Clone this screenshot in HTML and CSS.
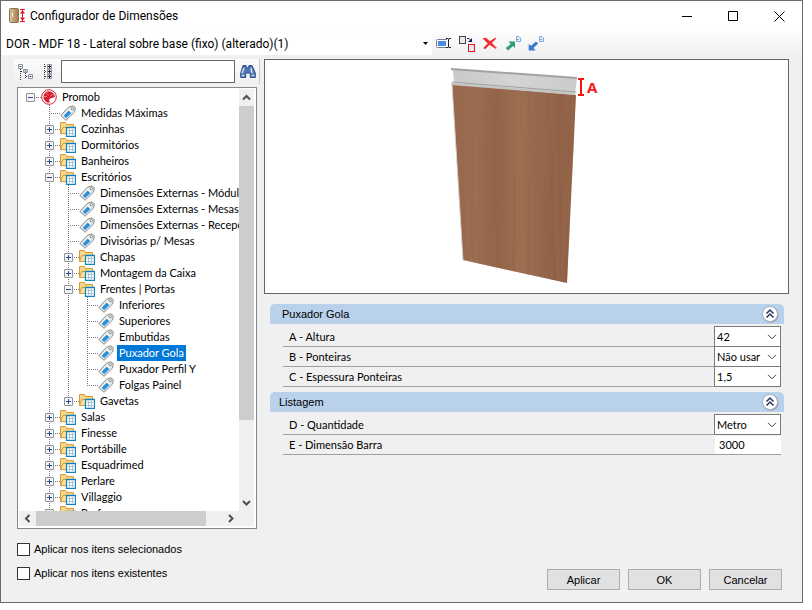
FILE: index.html
```html
<!DOCTYPE html>
<html lang="pt-BR">
  <head>
    <meta charset="UTF-8" />
    <meta name="viewport" content="width=device-width, initial-scale=1.0" />
    <link rel="stylesheet" href="styles.css">
    <title>Configurador de Dimensões</title>
  </head>
  <body>
    <!-- shared icons -->
    <svg class="sprite" aria-hidden="true">
      <symbol id="tag" viewBox="0 0 16 16">
        <path d="M.8 10.500 8.500 2.200 13 .8 15.300 2.700 14.600 7 6 15.300Z" fill="#e6e6e6" stroke="#8c8c8c" />
        <path d="M2.800 10.500 9 4l3.500 3.200L6 13.500Z" fill="#fff" />
        <path d="M3.600 10.800 8.600 5.600l2.900 2.400-5.300 5.200Z" fill="#2a93d5" />
        <circle cx="12.300" cy="3.700" r="1.200" fill="#fff" stroke="#888" />
      </symbol>
      <symbol id="folder" viewBox="0 0 16 16">
        <path d="M.5 1.500h5l1 2h7v9H.5Z" fill="#f8d68a" stroke="#d69a35" />
        <path d="M.5 12.500 3 6.500h11v6Z" fill="#fde3a0" stroke="#d69a35" />
        <path d="M6.500 6.500h9v9h-9Z" fill="#fff" stroke="#1581bd" stroke-width="1.300" />
        <path d="M8 9.500h6M8 12.500h6M9.500 9v5M12.500 9v5" stroke="#9cc4e4" />
        <path d="M9 8.500h1M12 8.500h1" stroke="#f0a840" />
      </symbol>
      <symbol id="chevron" viewBox="0 0 10 6">
        <path d="M1 .8 5 4.800 9 .8" fill="none" stroke="#444" />
      </symbol>
      <symbol id="collapse" viewBox="0 0 18 18">
        <circle cx="9.500" cy="9.500" r="8" fill="#8994a8" />
        <circle cx="9" cy="9" r="7.500" fill="#fff" stroke="#a9b3c4" />
        <path d="M5.500 8.500 9 5l3.500 3.500M5.500 12.500 9 9l3.500 3.500" fill="none" stroke="#24345f" stroke-width="1.500" />
      </symbol>
    </svg>

    <div class="window">
      <div class="titlebar">
        <svg class="app-icon" viewBox="0 0 18 16">
          <defs>
            <linearGradient id="box"><stop offset="0" stop-color="#dcc49c" /><stop offset="1" stop-color="#a07a4d" /></linearGradient>
          </defs>
          <rect x=".5" y=".5" width="9" height="14" rx="1" fill="url(#box)" stroke="#8f734f" />
          <path d="M3.500 4.500v4" stroke="#fff" />
          <path d="M11 1.500h5M11 13.500h5M13.500 2v12" stroke="#e0142c" />
          <path d="M11 5.500 13.500 2 16 5.500ZM11 9.500l2.500 3.500L16 9.500Z" fill="#e0142c" />
        </svg>
        <span class="title">Configurador de Dimensões</span>
        <button class="win-button" aria-label="Minimizar"><svg viewBox="0 0 11 11"><path d="M0 5.500h10" stroke="#000" /></svg></button>
        <button class="win-button" aria-label="Maximizar"><svg viewBox="0 0 11 11"><path d="M.5.5h9v9h-9Z" fill="none" stroke="#000" /></svg></button>
        <button class="win-button" aria-label="Fechar"><svg viewBox="0 0 11 11"><path d="M.5.5l10 10M10.500.5l-10 10" stroke="#000" /></svg></button>
      </div>

      <div class="toolbar">
        <div class="model">
          <select aria-label="Modelo">
            <option>DOR - MDF 18 - Lateral sobre base (fixo) (alterado)(1)</option>
          </select>
          <svg viewBox="0 0 5 3"><path d="M0 0h5L2.500 3Z" /></svg>
        </div>
        <button class="tool" aria-label="Renomear">
          <svg viewBox="0 0 16 16">
            <rect x=".5" y="3.500" width="12" height="8" rx="1" fill="#fff" stroke="#6f7f9c" />
            <rect x="2" y="5" width="8" height="5" fill="#4b8be8" />
            <path d="M12.500 2.500v9" stroke="#fff" stroke-width="3" />
            <path d="M10 2.500h2l.5.5.5-.5h2M12.500 3v8M10 11.500h2l.5-.5.5.5h2" fill="none" stroke="#222" />
          </svg>
        </button>
        <button class="tool" aria-label="Copiar">
          <svg viewBox="0 0 16 16">
            <rect x=".5" y=".5" width="6" height="7" fill="#e8e8ee" stroke="#444" />
            <rect x="9.500" y="8.500" width="6" height="7" fill="#e8e8ee" stroke="#e8141c" />
            <path d="M8 2.500h2l2 2" fill="none" stroke="#14206c" />
            <path d="M13 2v4H9Z" fill="#14206c" />
          </svg>
        </button>
        <button class="tool" aria-label="Excluir">
          <svg viewBox="0 0 16 16"><path d="M1 2.500l3-.5L8 5.500 13 2l1 .5L9.500 7l5 5-1 .5-6-4L3 13l-1.500-1L6 7.500Z" fill="#f0262b" stroke="#f0262b" stroke-width=".5" /></svg>
        </button>
        <button class="tool" aria-label="Exportar">
          <svg viewBox="0 0 16 16">
            <path d="M11.500.5h2l2 1.500v3.500h-4Z" fill="#e6f0fb" stroke="#7ea7dc" />
            <path d="M12 3.500h2" stroke="#7ea7dc" />
            <path d="M3.500 5.500H10V12L8 10l-5 4.500L.7 12 5.800 8Z" fill="#2ba06d" />
          </svg>
        </button>
        <button class="tool" aria-label="Importar">
          <svg viewBox="0 0 16 16">
            <path d="M11.500.5h2l2 1.500v3.500h-4Z" fill="#e6f0fb" stroke="#7ea7dc" />
            <path d="M12 3.500h2" stroke="#7ea7dc" />
            <path d="M8 5.500 10.200 7.500 5.500 12l2 2.500H.7V8L3 9.800Z" fill="#3a7ccb" />
          </svg>
        </button>
      </div>

      <div class="content">
        <div class="sidebar">
          <div class="search">
            <button class="tool" aria-label="Expandir tudo">
              <svg viewBox="0 0 16 16">
                <path d="M2.500 5v11M3 7.500h3M7.500 9v6M8 12.500h3" fill="none" stroke="#333" stroke-dasharray="1 1" />
                <path d="M.5.500h4v4h-4ZM5.500 5.500h4v3h-4ZM10.500 10.500h4v4h-4Z" fill="#fff" stroke="#8a93a3" />
                <path d="M1.500 2.500h2M6.500 7h2M11.500 12.500h2" stroke="#345" />
              </svg>
            </button>
            <button class="tool" aria-label="Recolher tudo">
              <svg viewBox="0 0 16 16">
                <path d="M3.500 0v16M4 2.500h3M4 7.500h3M4 12.500h3" fill="none" stroke="#333" stroke-dasharray="1 1" />
                <path d="M6.500.500h4v4h-4ZM6.500 5.500h4v4h-4ZM6.500 10.500h4v4h-4Z" fill="#fff" stroke="#8a93a3" />
                <path d="M7 2.500h3M7 7.500h3M7 12.500h3M8.500 1v3M8.500 6v3M8.500 11v3" stroke="#222" />
              </svg>
            </button>
            <input type="text" aria-label="Pesquisar" />
            <button class="tool" aria-label="Buscar">
              <svg viewBox="0 0 16 16">
                <path d="M3 1.500h3l.8 2.500h1.400L9 1.500h3L15.300 9v4.500h-5V9H5.700v4.500h-5V9Z" fill="#5277b5" stroke="#2e4c85" />
                <path d="M4 4 2 9M11 4l1 5" stroke="#d6e3f7" stroke-width="1.500" />
                <path d="M1.500 11.500h3M11.500 11.500h3" stroke="#a9c0e6" stroke-width="2" />
              </svg>
            </button>
          </div>

          <div class="tree">
            <ul class="tree-list">
              <li>
                <div class="node"><button class="toggle open" aria-label="Recolher"></button>
                  <svg viewBox="0 0 16 16">
                    <circle cx="8" cy="8" r="7.300" fill="#fff" stroke="#d3202e" />
                    <path d="M8 2.200a5.800 5.800 0 1 0 .5 11.600L8.200 10l3.300-1.300L13.800 8A5.800 5.800 0 0 0 8 2.200Z" fill="#d3202e" />
                    <path d="M5 3.500l2.500 3M3 7.500h3M9 7l4-2" stroke="#ec7b82" />
                  </svg><span>Promob</span></div>
                <ul>
                  <li><div class="node leaf"><svg><use href="#tag" /></svg><span>Medidas Máximas</span></div></li>
                  <li><div class="node"><button class="toggle" aria-label="Expandir"></button><svg><use href="#folder" /></svg><span>Cozinhas</span></div></li>
                  <li><div class="node"><button class="toggle" aria-label="Expandir"></button><svg><use href="#folder" /></svg><span>Dormitórios</span></div></li>
                  <li><div class="node"><button class="toggle" aria-label="Expandir"></button><svg><use href="#folder" /></svg><span>Banheiros</span></div></li>
                  <li>
                    <div class="node"><button class="toggle open" aria-label="Recolher"></button><svg><use href="#folder" /></svg><span>Escritórios</span></div>
                    <ul>
                      <li><div class="node leaf"><svg><use href="#tag" /></svg><span>Dimensões Externas - Módulos</span></div></li>
                      <li><div class="node leaf"><svg><use href="#tag" /></svg><span>Dimensões Externas - Mesas</span></div></li>
                      <li><div class="node leaf"><svg><use href="#tag" /></svg><span>Dimensões Externas - Recepção</span></div></li>
                      <li><div class="node leaf"><svg><use href="#tag" /></svg><span>Divisórias p/ Mesas</span></div></li>
                      <li><div class="node"><button class="toggle" aria-label="Expandir"></button><svg><use href="#folder" /></svg><span>Chapas</span></div></li>
                      <li><div class="node"><button class="toggle" aria-label="Expandir"></button><svg><use href="#folder" /></svg><span>Montagem da Caixa</span></div></li>
                      <li>
                        <div class="node"><button class="toggle open" aria-label="Recolher"></button><svg><use href="#folder" /></svg><span>Frentes | Portas</span></div>
                        <ul>
                          <li><div class="node leaf"><svg><use href="#tag" /></svg><span>Inferiores</span></div></li>
                          <li><div class="node leaf"><svg><use href="#tag" /></svg><span>Superiores</span></div></li>
                          <li><div class="node leaf"><svg><use href="#tag" /></svg><span>Embutidas</span></div></li>
                          <li><div class="node leaf"><svg><use href="#tag" /></svg><span class="selected">Puxador Gola</span></div></li>
                          <li><div class="node leaf"><svg><use href="#tag" /></svg><span>Puxador Perfil Y</span></div></li>
                          <li><div class="node leaf"><svg><use href="#tag" /></svg><span>Folgas Painel</span></div></li>
                        </ul>
                      </li>
                      <li><div class="node"><button class="toggle" aria-label="Expandir"></button><svg><use href="#folder" /></svg><span>Gavetas</span></div></li>
                    </ul>
                  </li>
                  <li><div class="node"><button class="toggle" aria-label="Expandir"></button><svg><use href="#folder" /></svg><span>Salas</span></div></li>
                  <li><div class="node"><button class="toggle" aria-label="Expandir"></button><svg><use href="#folder" /></svg><span>Finesse</span></div></li>
                  <li><div class="node"><button class="toggle" aria-label="Expandir"></button><svg><use href="#folder" /></svg><span>Portábille</span></div></li>
                  <li><div class="node"><button class="toggle" aria-label="Expandir"></button><svg><use href="#folder" /></svg><span>Esquadrimed</span></div></li>
                  <li><div class="node"><button class="toggle" aria-label="Expandir"></button><svg><use href="#folder" /></svg><span>Perlare</span></div></li>
                  <li><div class="node"><button class="toggle" aria-label="Expandir"></button><svg><use href="#folder" /></svg><span>Villaggio</span></div></li>
                  <li><div class="node"><button class="toggle" aria-label="Expandir"></button><svg><use href="#folder" /></svg><span>Perfume</span></div></li>
                </ul>
              </li>
            </ul>
            <div class="scroll vertical">
              <svg viewBox="0 0 9 9"><path d="M1 6.500 4.500 3 8 6.500" /></svg>
              <div class="track"><div class="thumb"></div></div>
              <svg viewBox="0 0 9 9"><path d="M1 3l3.500 3.500L8 3" /></svg>
            </div>
            <div class="scroll horizontal">
              <svg viewBox="0 0 9 9"><path d="M6.500 1 3 4.500 6.500 8" /></svg>
              <div class="track"><div class="thumb"></div></div>
              <svg viewBox="0 0 9 9"><path d="M3 1l3.500 3.500L3 8" /></svg>
            </div>
          </div>

          <div class="checks">
            <label><input type="checkbox" />Aplicar nos itens selecionados</label>
            <label><input type="checkbox" />Aplicar nos itens existentes</label>
          </div>
        </div>

        <div class="main">
          <div class="preview">
            <svg viewBox="0 0 523 233" role="img" aria-label="Puxador Gola">
              <defs>
                <linearGradient id="wood">
                  <stop offset="0" stop-color="#98684e" />
                  <stop offset=".2" stop-color="#9f6d51" />
                  <stop offset=".36" stop-color="#926147" />
                  <stop offset=".55" stop-color="#a17053" />
                  <stop offset=".7" stop-color="#97664b" />
                  <stop offset=".82" stop-color="#906046" />
                  <stop offset="1" stop-color="#926147" />
                </linearGradient>
                <linearGradient id="metal">
                  <stop offset="0" stop-color="#c9c9c9" />
                  <stop offset=".5" stop-color="#d4d4d4" />
                  <stop offset="1" stop-color="#cbcbcb" />
                </linearGradient>
                <filter id="grain" x="0" y="0" width="100%" height="100%">
                  <feTurbulence type="fractalNoise" baseFrequency=".35 .008" numOctaves="3" seed="4" />
                  <feColorMatrix values="0 0 0 0 .3  0 0 0 0 .14  0 0 0 0 .07  2 0 0 0 -.75" />
                </filter>
                <clipPath id="door"><path d="M187 24 311 35 302 223 198 200Z" /></clipPath>
              </defs>
              <path d="M187 24 311 35 302 223 198 200Z" fill="url(#wood)" />
              <g clip-path="url(#door)"><rect x="180" y="20" width="140" height="210" filter="url(#grain)" /></g>
              <path d="M187 25 198 200" stroke="#d8d0ca" />
              <path d="M186 9 312 18 310 34 186 24 189 22 188 11Z" fill="url(#metal)" />
              <path d="M186 9 312 18" stroke="#a2a2a2" stroke-width="2" />
              <path d="M187 22 311 32" stroke="#a0a0a0" />
              <path d="M186 24 310 34" stroke="#c4c4c4" stroke-width="2" />
              <path d="M313 19h6M313 35h6M316 19v16" stroke="#fa1414" stroke-width="2" />
              <text x="322" y="33" class="mark">A</text>
            </svg>
          </div>

          <div class="group">
            <div class="group-head first">
              <span>Puxador Gola</span>
              <button class="collapse" aria-label="Recolher grupo"><svg><use href="#collapse" /></svg></button>
            </div>
            <div class="field">
              <label for="altura">A - Altura</label>
              <div class="combo"><select id="altura"><option>42</option></select><svg><use href="#chevron" /></svg></div>
            </div>
            <div class="field">
              <label for="ponteiras">B - Ponteiras</label>
              <div class="combo"><select id="ponteiras"><option>Não usar</option></select><svg><use href="#chevron" /></svg></div>
            </div>
            <div class="field">
              <label for="espessura">C - Espessura Ponteiras</label>
              <div class="combo"><select id="espessura"><option>1,5</option></select><svg><use href="#chevron" /></svg></div>
            </div>
          </div>

          <div class="group">
            <div class="group-head">
              <span>Listagem</span>
              <button class="collapse" aria-label="Recolher grupo"><svg><use href="#collapse" /></svg></button>
            </div>
            <div class="field">
              <label for="quantidade">D - Quantidade</label>
              <div class="combo"><select id="quantidade"><option>Metro</option></select><svg><use href="#chevron" /></svg></div>
            </div>
            <div class="field">
              <label for="barra">E - Dimensão Barra</label>
              <input type="text" id="barra" value="3000" />
            </div>
          </div>

          <div class="actions">
            <button>Aplicar</button>
            <button>OK</button>
            <button>Cancelar</button>
          </div>
        </div>
      </div>
    </div>
  </body>
</html>
```

FILE: styles.css
```css
* {
    box-sizing: border-box;
}

body {
    margin: 0;
    height: 100vh;
    padding: 0 9px 7px 0;
    background: #fff;
    color: #000;
    font: 11px/16px "Liberation Sans", Arial, sans-serif;
}

button,
input,
select {
    font: inherit;
    color: inherit;
}

svg {
    display: block;
    flex: none;
}

.sprite {
    display: none;
}

.window {
    display: flex;
    flex-direction: column;
    height: 100%;
    border: 1px solid #6b6b6b;
    background: #f0f0f0;
}

/* title bar */
.titlebar {
    display: flex;
    align-items: center;
    height: 30px;
    padding-left: 8px;
    background: #fff;
}

.app-icon {
    width: 18px;
    height: 16px;
}

.title {
    flex: 1;
    padding-left: 3px;
    font-family: Roboto, "Segoe UI", sans-serif;
    font-size: 12px;
}

.win-button {
    display: grid;
    place-items: center;
    width: 46px;
    height: 30px;
    padding: 0;
    border: none;
    background: none;
}

.win-button svg {
    width: 11px;
    height: 11px;
}

/* toolbar */
.toolbar {
    display: flex;
    align-items: center;
    height: 25px;
    padding-left: 1px;
    background: linear-gradient(#fdfdfd, #f0f0f0);
}

.model,
.combo {
    display: grid;
    align-items: center;
}

.model > *,
.combo > * {
    grid-area: 1 / 1;
}

.model select,
.combo select {
    appearance: none;
    width: 100%;
    border: none;
    border-radius: 0;
    background: #fff;
    outline: none;
}

.model svg,
.combo svg {
    justify-self: end;
    pointer-events: none;
}

.model {
    width: 430px;
    font-family: Roboto, "Segoe UI", sans-serif;
    font-size: 12px;
}

.model select {
    height: 22px;
    padding: 0 16px 0 4px;
}

.model svg {
    width: 5px;
    height: 3px;
    margin-right: 4px;
}

.tool {
    display: grid;
    place-items: center;
    flex: none;
    width: 23px;
    height: 23px;
    padding: 0;
    border: none;
    background: none;
}

.tool svg {
    width: 16px;
    height: 16px;
}

/* layout */
.content {
    display: flex;
    flex: 1;
    gap: 4px;
    min-height: 0;
    padding: 3px 13px 0;
}

.sidebar {
    display: flex;
    flex-direction: column;
    flex: none;
    width: 246px;
}

.main {
    display: flex;
    flex-direction: column;
    flex: 1;
}

.search {
    display: flex;
    align-items: center;
    height: 25px;
    margin-bottom: 3px;
    background: linear-gradient(#fcfcfc, #f0f0f0);
    border-right: 1px solid #c8c8c8;
}

.search input {
    flex: 1;
    min-width: 0;
    height: 23px;
    margin: 0 1px;
    border: 1px solid #646464;
    background: #fff;
}

/* tree */
.tree {
    display: grid;
    grid-template: minmax(0, 1fr) 15px / minmax(0, 1fr) 15px;
    flex: 1;
    min-height: 0;
    margin: 0 3px;
    padding: 1px 2px 2px 1px;
    border: 1px solid #828790;
    background: #fff;
    font-family: Lato, "Liberation Sans", sans-serif;
}

.tree ul {
    margin: 0;
    padding: 0 0 0 19px;
    list-style: none;
}

.tree .tree-list {
    overflow: hidden;
    padding-left: 2px;
}

.tree li li {
    background: repeating-linear-gradient(#777 0 1px, transparent 1px 2px) 9px 0 / 1px 100% no-repeat;
}

.tree li li:last-child {
    background-size: 1px 8px;
}

.node {
    display: flex;
    align-items: center;
    height: 16px;
    white-space: nowrap;
    background: repeating-linear-gradient(90deg, #777 0 1px, transparent 1px 2px) 9px 8px / 11px 1px no-repeat;
}

.node.leaf {
    padding-left: 20px;
}

.node svg {
    width: 16px;
    height: 16px;
}

.node span {
    margin-left: 3px;
    padding: 0 2px;
}

.node .selected {
    background: #0078d7;
    color: #fff;
}

.toggle {
    flex: none;
    width: 9px;
    height: 9px;
    margin: 0 6px 0 5px;
    padding: 0;
    border: 1px solid #919191;
    border-radius: 1px;
    background:
        linear-gradient(#2b4a9b, #2b4a9b) center / 5px 1px no-repeat,
        linear-gradient(#2b4a9b, #2b4a9b) center / 1px 5px no-repeat,
        #f4f4f4;
}

.toggle.open {
    background: linear-gradient(#2b4a9b, #2b4a9b) center / 5px 1px no-repeat, #f4f4f4;
}

/* scroll bars */
.scroll {
    display: flex;
    align-items: center;
    background: #f0f0f0;
}

.scroll svg {
    width: 9px;
    height: 9px;
    margin: 4px;
    fill: none;
    stroke: #505050;
    stroke-width: 2;
}

.track {
    display: flex;
    flex: 1;
}

.thumb {
    background: #cdcdcd;
}

.vertical {
    flex-direction: column;
}

.vertical .thumb {
    width: 15px;
    height: 100%;
}

.vertical .track {
    padding-bottom: 74px;
}

.horizontal {
    grid-column: 1 / 3;
    padding-right: 15px;
}

.horizontal .track {
    height: 15px;
    padding-right: 16px;
}

.horizontal .thumb {
    width: 100%;
}

/* check boxes */
.checks {
    display: flex;
    flex-direction: column;
    gap: 8px;
    padding: 12px 3px 21px;
}

.checks label {
    display: flex;
    align-items: center;
    gap: 4px;
}

.checks input {
    appearance: none;
    width: 13px;
    height: 13px;
    margin: 0;
    border: 1px solid #333;
    background: #fff;
}

/* preview */
.preview {
    height: 235px;
    border: 1px solid #646464;
    background: #fff;
}

.preview svg {
    width: 100%;
    height: 100%;
}

.mark {
    fill: #fa1414;
    font: bold 15px "Open Sans", sans-serif;
}

/* property groups */
.group {
    margin: 10px 5px 0 6px;
}

.group + .group {
    margin-top: 5px;
}

.group-head {
    display: flex;
    align-items: center;
    justify-content: space-between;
    height: 20px;
    margin-bottom: 3px;
    padding: 0 5px 0 9px;
    border-radius: 5px 5px 0 0;
    background: #b9d1ea;
}

.group-head.first {
    padding-left: 12px;
}

.collapse {
    padding: 0;
    border: none;
    background: none;
}

.collapse svg {
    width: 18px;
    height: 18px;
}

.field {
    display: flex;
    align-items: center;
    height: 20px;
    margin: 0 3px 0 13px;
    padding-left: 6px;
    border-bottom: 1px solid #a0a0a0;
    font-family: Lato, "Liberation Sans", sans-serif;
}

.field label {
    flex: 1;
}

.combo {
    width: 67px;
    height: 21px;
}

.combo select {
    height: 21px;
    padding: 0 2px;
    border: 1px solid #7a7a7a;
}

.combo svg {
    width: 10px;
    height: 6px;
    margin-right: 4px;
}

.field input {
    width: 66px;
    height: 18px;
    padding: 0 4px;
    border: none;
    background: #fff;
}

/* footer buttons */
.actions {
    display: flex;
    justify-content: flex-end;
    gap: 8px;
    margin-top: auto;
    padding: 0 7px 12px 0;
}

.actions button {
    width: 73px;
    height: 21px;
    padding: 0;
    border: 1px solid #adadad;
    background: #e1e1e1;
}
```
